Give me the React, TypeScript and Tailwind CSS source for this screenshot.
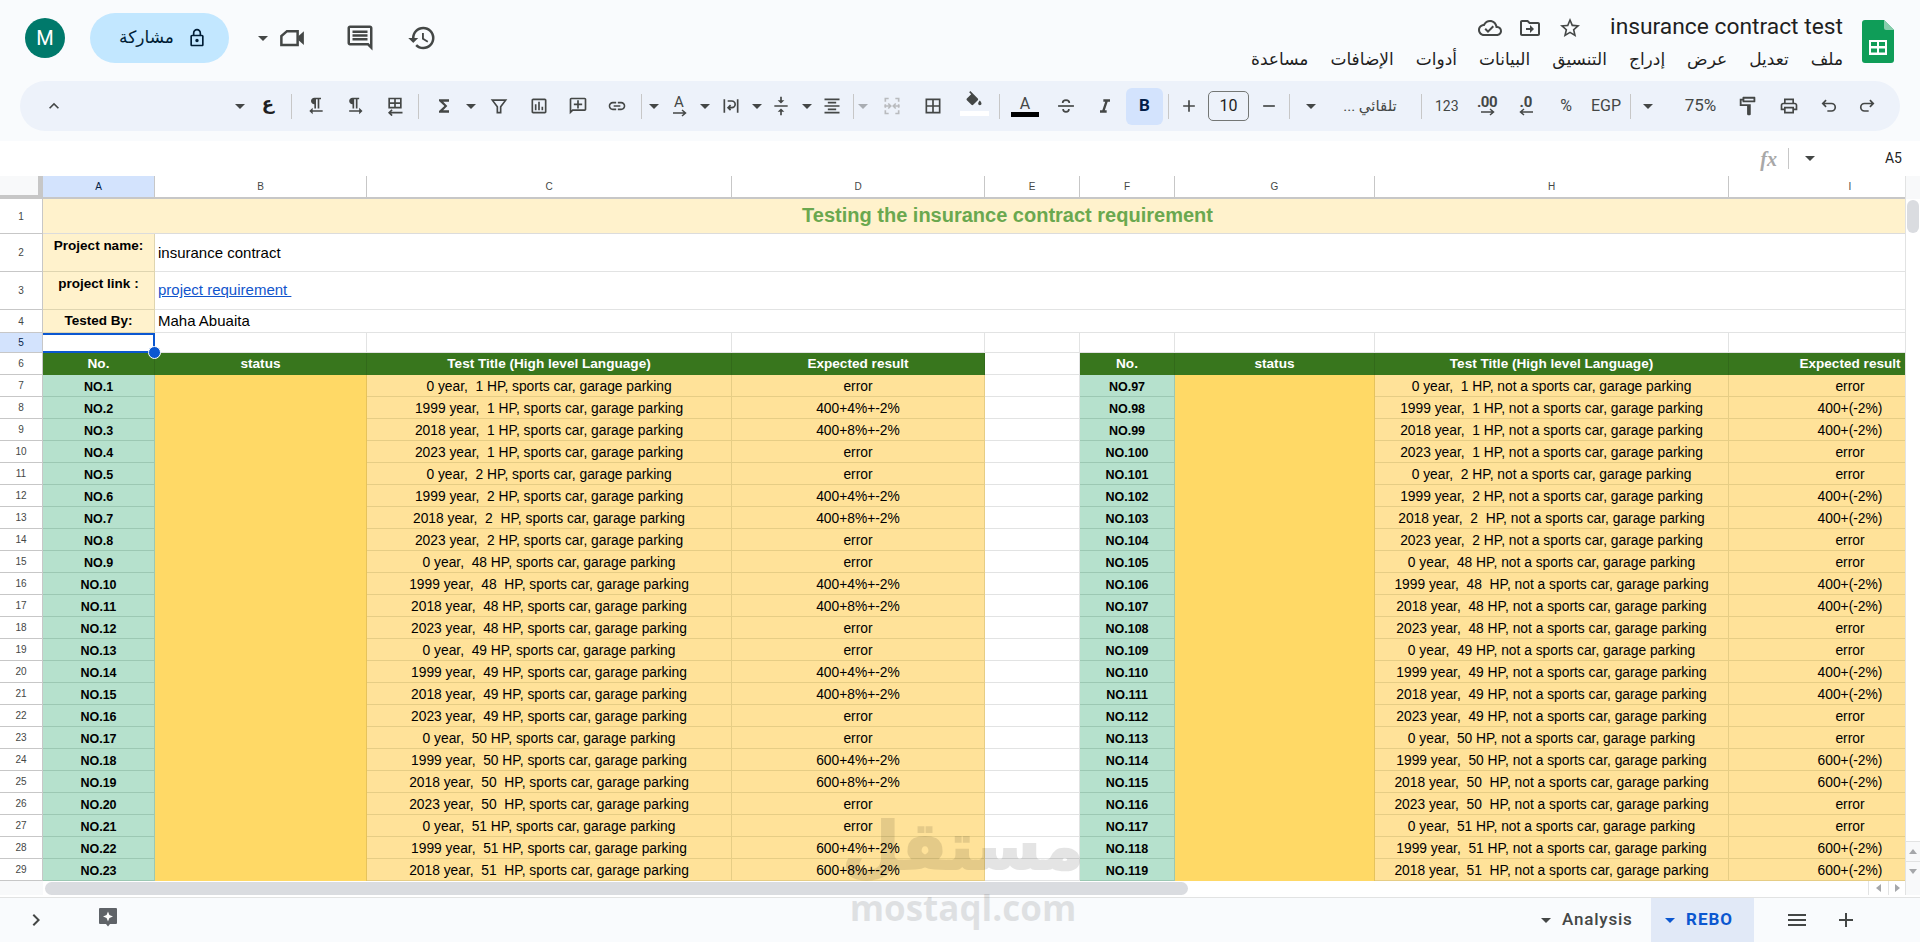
import type { ReactNode } from "react";

const ui = "font-['Roboto','DejaVu_Sans',sans-serif]";
const sheet = "font-['Liberation_Sans','Arial',sans-serif]";

const titles = [
  "0 year,  1 HP, sports car, garage parking",
  "1999 year,  1 HP, sports car, garage parking",
  "2018 year,  1 HP, sports car, garage parking",
  "2023 year,  1 HP, sports car, garage parking",
  "0 year,  2 HP, sports car, garage parking",
  "1999 year,  2 HP, sports car, garage parking",
  "2018 year,  2  HP, sports car, garage parking",
  "2023 year,  2 HP, sports car, garage parking",
  "0 year,  48 HP, sports car, garage parking",
  "1999 year,  48  HP, sports car, garage parking",
  "2018 year,  48 HP, sports car, garage parking",
  "2023 year,  48 HP, sports car, garage parking",
  "0 year,  49 HP, sports car, garage parking",
  "1999 year,  49 HP, sports car, garage parking",
  "2018 year,  49 HP, sports car, garage parking",
  "2023 year,  49 HP, sports car, garage parking",
  "0 year,  50 HP, sports car, garage parking",
  "1999 year,  50 HP, sports car, garage parking",
  "2018 year,  50  HP, sports car, garage parking",
  "2023 year,  50  HP, sports car, garage parking",
  "0 year,  51 HP, sports car, garage parking",
  "1999 year,  51 HP, sports car, garage parking",
  "2018 year,  51  HP, sports car, garage parking",
];

const menu = ["ملف", "تعديل", "عرض", "إدراج", "التنسيق", "البيانات", "أدوات", "الإضافات", "مساعدة"];
const columns = ["A", "B", "C", "D", "E", "F", "G", "H", "I"];

function leftResult(i: number) {
  const year = i % 4;
  if (year === 0 || year === 3) return "error";
  const base = i < 17 ? "400" : "600";
  return `${base}+${year === 1 ? "4" : "8"}%+-2%`;
}

function rightResult(i: number) {
  const year = i % 4;
  if (year === 0 || year === 3) return "error";
  return i < 17 ? "400+(-2%)" : "600+(-2%)";
}

function Mi({ d, className = "", size = 20 }: { d: string; className?: string; size?: number }) {
  return (
    <svg width={size} height={size} viewBox="0 0 24 24" fill="currentColor" className={`shrink-0 ${className}`}>
      <path d={d} />
    </svg>
  );
}

function Line({ children, className = "", size = 20 }: { children: ReactNode; className?: string; size?: number }) {
  return (
    <svg width={size} height={size} viewBox="0 0 24 24" fill="none" stroke="currentColor" strokeWidth="2" className={`shrink-0 ${className}`}>
      {children}
    </svg>
  );
}

// little arrow under the decimal and rotate buttons
function SmallArrow({ left = false }: { left?: boolean }) {
  return (
    <svg width="15" height="8" viewBox="0 0 15 8" fill="none" stroke="currentColor" strokeWidth="1.500" className={`shrink-0 ${left ? "-scale-x-100" : ""}`}>
      <path d="M1 4h12.500M10 1l3.500 3-3.500 3" />
    </svg>
  );
}

function Caret({ className = "" }: { className?: string }) {
  return <span className={`h-0 w-0 shrink-0 border-x-[5px] border-t-[5px] border-x-transparent border-t-[#444746] ${className}`} />;
}

function Sep({ className = "" }: { className?: string }) {
  return <span className={`h-[25px] w-px shrink-0 bg-[#c7c7c7] ${className}`} />;
}

function SheetsLogo() {
  return (
    <svg width="32" height="43" viewBox="0 0 32 43" className="shrink-0">
      <path d="M3 0h19l10 10v30a3 3 0 0 1-3 3H3a3 3 0 0 1-3-3V3a3 3 0 0 1 3-3z" fill="#0f9d58" />
      <path d="M22 0l10 10H24a2 2 0 0 1-2-2z" fill="#87ceac" />
      <path d="M7 20h18v15H7z" fill="#fff" />
      <path d="M9 22h6v4H9zm8 0h6v4h-6zM9 28.500h6v4H9zm8 0h6v4h-6z" fill="#0f9d58" />
    </svg>
  );
}

function Header() {
  return (
    <div className="flex h-[81px] items-start bg-[#f9fbfd]">
      <div className="ml-[25px] mt-[18px] flex h-10 w-10 items-center justify-center rounded-full bg-[#00796b] text-[20px] text-white">M</div>
      <div className="ml-[25px] mt-[13px] flex h-[50px] w-[139px] items-center justify-center gap-[13px] rounded-full bg-[#c2e7ff] pl-[7px] text-[#001d35]">
        <span dir="rtl" className="text-[17px]">مشاركة</span>
        <Mi size={20} className="text-[#001d35]" d="M18 8h-1V6c0-2.760-2.240-5-5-5S7 3.240 7 6v2H6c-1.100 0-2 .9-2 2v10c0 1.100.9 2 2 2h12c1.100 0 2-.9 2-2V10c0-1.100-.9-2-2-2zM9 6c0-1.660 1.340-3 3-3s3 1.340 3 3v2H9V6zm9 14H6V10h12v10zm-6-3c1.100 0 2-.9 2-2s-.9-2-2-2-2 .9-2 2 .9 2 2 2z" />
      </div>
      <div className="mt-[23px] flex items-center text-[#444746]">
        <Caret className="ml-[29px]" />
        <Line size={30} className="ml-[9px]">
          <path d="M8 6.500h8.500v11H3.500v-7z" />
          <path d="M17 10.500l4.500-4v11l-4.500-4z" fill="currentColor" stroke="none" />
        </Line>
        <Mi size={30} className="ml-[38px]" d="M21.990 4c0-1.100-.89-2-1.990-2H4c-1.100 0-2 .9-2 2v12c0 1.100.9 2 2 2h14l4 4-.01-18zM20 4v13.170L18.830 16H4V4h16zM6 12h12v2H6zm0-3h12v2H6zm0-3h12v2H6z" />
        <Mi size={30} className="ml-[32px]" d="M13 3a9 9 0 0 0-9 9H1l3.890 3.890.07.14L9 12H6c0-3.870 3.130-7 7-7s7 3.130 7 7-3.130 7-7 7c-1.930 0-3.680-.79-4.940-2.060l-1.420 1.420A8.954 8.954 0 0 0 13 21a9 9 0 0 0 0-18zm-1 5v5l4.280 2.540.72-1.210-3.500-2.080V8H12z" />
      </div>
      <div className="ml-auto mr-[19px] mt-[12px] flex flex-col items-end">
        <div className="flex h-[31px] items-center text-[#444746]">
          <Mi size={24} className="mr-[16px]" d="M19.350 10.040C18.670 6.590 15.640 4 12 4 9.110 4 6.600 5.640 5.350 8.040 2.340 8.360 0 10.910 0 14c0 3.310 2.690 6 6 6h13c2.760 0 5-2.240 5-5 0-2.640-2.050-4.780-4.650-4.960zM19 18H6c-2.210 0-4-1.790-4-4 0-2.050 1.530-3.760 3.560-3.970l1.070-.11.5-.95C8.080 7.140 9.940 6 12 6c2.620 0 4.880 1.860 5.390 4.430l.3 1.500 1.530.11c1.560.1 2.780 1.410 2.780 2.960 0 1.650-1.350 3-3 3zm-9-3.820l-2.090-2.090L6.500 13.500 10 17l6.010-6.010-1.410-1.410z" />
          <Mi size={24} className="mr-[16px]" d="M20 6h-8l-2-2H4c-1.100 0-2 .9-2 2v12c0 1.100.9 2 2 2h16c1.100 0 2-.9 2-2V8c0-1.100-.9-2-2-2zm0 12H4V6h5.170l2 2H20v10zm-8-1l4-4-4-4v3H8v2h4v3z" />
          <Mi size={24} className="mr-[28px]" d="M22 9.240l-7.190-.62L12 2 9.190 8.630 2 9.240l5.460 4.730L5.820 21 12 17.270 18.180 21l-1.630-7.030L22 9.240zM12 15.400l-3.760 2.270 1-4.280-3.320-2.880 4.380-.38L12 6.100l1.710 4.040 4.380.38-3.320 2.880 1 4.280L12 15.400z" />
          <span className="text-[22.800px] leading-none text-[#1f1f1f]">insurance contract test</span>
        </div>
        <div dir="rtl" className="mt-[4px] flex gap-[22px] text-[17px] leading-[24px] text-[#1f1f1f]">
          {menu.map((m) => (
            <span key={m}>{m}</span>
          ))}
        </div>
      </div>
      <div className="mr-[26px] mt-[20px]">
        <SheetsLogo />
      </div>
    </div>
  );
}

function Toolbar() {
  return (
    <div className="h-[60px] bg-[#f9fbfd]">
      <div className="mx-5 flex h-[50px] w-[1880px] items-center rounded-full bg-[#edf2fa] text-[14px] text-[#444746]">
        <Mi className="ml-[24px]" d="M7.410 15.410L12 10.830l4.590 4.580L18 14l-6-6-6 6z" />
        <Caret className="ml-[171px]" />
        <span className="-mt-[6px] ml-[13px] flex w-5 justify-center text-[18px] font-bold text-[#1f1f1f]">ع</span>
        <Sep className="ml-[13px]" />
        <Mi className="ml-[14px]" d="M10 10v5h2V4h2v11h2V4h2V2h-8C7.790 2 6 3.790 6 6s1.790 4 4 4zm-2 7v-3l-4 4 4 4v-3h12v-2H8z" />
        <Mi className="ml-[19px]" d="M9 10v5h2V4h2v11h2V4h2V2H9C6.790 2 5 3.790 5 6s1.790 4 4 4zm12 8l-4-4v3H5v2h12v3l4-4z" />
        <Line className="ml-[20px]">
          <path d="M5 3h14v11H5zM12 3v11M5 8.500h14" />
          <path d="M21 20H5M8.500 16.500L5 20l3.500 3.500" />
        </Line>
        <Sep className="ml-[13px]" />
        <Mi className="ml-[15px]" d="M18 4H6v2l6.500 6L6 18v2h12v-3h-7l5-5-5-5h7z" />
        <Caret className="ml-[12px]" />
        <Line className="ml-[13px]">
          <path d="M4 5h16l-6 8v7h-4v-7z" />
        </Line>
        <Mi className="ml-[20px]" d="M19 3H5c-1.100 0-2 .9-2 2v14c0 1.100.9 2 2 2h14c1.100 0 2-.9 2-2V5c0-1.100-.9-2-2-2zm0 16H5V5h14v14zM7 10h2v7H7zm4-3h2v10h-2zm4 6h2v4h-2z" />
        <Mi className="ml-[19px] -scale-x-100" d="M22 4c0-1.100-.9-2-2-2H4c-1.100 0-2 .9-2 2v12c0 1.100.9 2 2 2h14l4 4V4zm-2 13.170L18.830 16H4V4h16v13.170zM13 5h-2v4H7v2h4v4h2v-4h4V9h-4z" />
        <Mi className="ml-[19px]" d="M3.900 12c0-1.710 1.390-3.100 3.100-3.100h4V7H7c-2.760 0-5 2.240-5 5s2.240 5 5 5h4v-1.900H7c-1.710 0-3.100-1.390-3.100-3.100zM8 13h8v-2H8v2zm9-6h-4v1.900h4c1.710 0 3.100 1.390 3.100 3.100s-1.390 3.100-3.100 3.100h-4V17h4c2.760 0 5-2.240 5-5s-2.240-5-5-5z" />
        <Sep className="ml-[14px]" />
        <Caret className="ml-[7px]" />
        <span className="ml-[10px] flex w-5 flex-col items-center">
          <span className="text-[15px] leading-[14px]">A</span>
          <SmallArrow />
        </span>
        <Caret className="ml-[11px]" />
        <Line className="ml-[11px]">
          <path d="M4 4v16M20 4v16" />
          <path d="M8 6h5a4 4 0 0 1 0 8H9M11.500 11L8.500 14l3 3" />
        </Line>
        <Caret className="ml-[11px]" />
        <Mi className="ml-[9px]" d="M8 19h3v4h2v-4h3l-4-4-4 4zm8-14h-3V1h-2v4H8l4 4 4-4zM4 11v2h16v-2H4z" />
        <Caret className="ml-[11px]" />
        <Mi className="ml-[10px]" d="M7 15v2h10v-2H7zm-4 6h18v-2H3v2zm0-8h18v-2H3v2zm4-6v2h10V7H7zM3 3v2h18V3H3z" />
        <Sep className="ml-[11px]" />
        <Caret className="ml-[4px] opacity-40" />
        <Line className="ml-[14px] text-[#b9bbbe]">
          <path d="M8 3H4v4M16 3h4v4M8 21H4v-4M16 21h4v-4M4 10v4M20 10v4" />
          <path d="M3 12h7M7.500 9l3 3-3 3M21 12h-7M16.500 9l-3 3 3 3" />
        </Line>
        <Mi className="ml-[21px]" d="M3 3v18h18V3H3zm8 16H5v-6h6v6zm0-8H5V5h6v6zm8 8h-6v-6h6v6zm0-8h-6V5h6v6z" />
        <span className="ml-[21px] flex w-5 flex-col items-center">
          <Mi size={20} className="-mt-[5px]" d="M16.560 8.940L7.620 0 6.210 1.410l2.380 2.380-5.150 5.150c-.59.59-.59 1.540 0 2.120l5.500 5.500c.29.29.68.44 1.060.44s.77-.15 1.060-.44l5.500-5.500c.59-.58.59-1.530 0-2.120zM19 11.500s-2 2.170-2 3.500c0 1.100.9 2 2 2s2-.9 2-2c0-1.330-2-3.500-2-3.500z" />
          <span className="h-[5px] w-[29px] shrink-0 bg-white" />
        </span>
        <Sep className="ml-[15px]" />
        <span className="ml-[15px] flex w-5 flex-col items-center">
          <span className="text-[16px] leading-[17px]">A</span>
          <span className="h-[5px] w-[28px] shrink-0 bg-black" />
        </span>
        <Line className="ml-[21px]">
          <path d="M2.500 12h19" />
          <path d="M8 8.500C8 6 10 5 12 5s4 1 4 3.500M8.500 15.500C8.500 18 10 19 12 19s3.500-1 3.500-3.500" />
        </Line>
        <Mi className="ml-[19px]" d="M10 4v3h2.210l-3.420 10H6v3h8v-3h-2.210l3.420-10H18V4z" />
        <span className="ml-[11px] flex h-[37px] w-[37px] items-center justify-center rounded-[6px] bg-[#d3e3fd] text-[17px] font-bold text-[#041e49]">B</span>
        <Sep className="ml-[5px]" />
        <Mi className="ml-[10px]" d="M19 13h-6v6h-2v-6H5v-2h6V5h2v6h6v2z" />
        <span className="ml-[9px] flex h-[30px] w-[41px] items-center justify-center rounded-[5px] border border-[#747775] text-[16px] text-[#1f1f1f]">10</span>
        <Mi className="ml-[10px]" d="M19 13H5v-2h14v2z" />
        <Sep className="ml-[10px]" />
        <Caret className="ml-[16px]" />
        <span dir="rtl" className="ml-[23px] flex w-[62px] justify-center whitespace-nowrap text-[15px]">تلقائي ...</span>
        <Sep className="ml-[20px]" />
        <span className="ml-[13px] w-[22px] whitespace-nowrap text-center text-[14px]">123</span>
        <span className="ml-[18px] flex w-6 flex-col items-center">
          <span className="text-[15px] font-bold leading-[12px] tracking-[-0.5px]">.00</span>
          <SmallArrow />
        </span>
        <span className="ml-[17px] flex w-5 flex-col items-center">
          <span className="text-[15px] font-bold leading-[12px]">.0</span>
          <SmallArrow left />
        </span>
        <span className="ml-[23px] flex w-[14px] justify-center text-[16px]">%</span>
        <span className="ml-[17px] flex w-8 justify-center text-[16px]">EGP</span>
        <Sep className="ml-[8px]" />
        <Caret className="ml-[12px]" />
        <span className="ml-[30px] flex w-[35px] justify-center text-[17px]">75%</span>
        <Mi size={22} className="ml-[19px] -scale-x-100" d="M18 4V3c0-.55-.45-1-1-1H5c-.55 0-1 .45-1 1v4c0 .55.45 1 1 1h12c.55 0 1-.45 1-1V6h1v4H9v11c0 .55.45 1 1 1h2c.55 0 1-.45 1-1v-9h8V4h-3zm-2 2H6V4h10v2z" />
        <Mi className="ml-[20px]" d="M19 8h-1V3H6v5H5c-1.660 0-3 1.340-3 3v6h4v4h12v-4h4v-6c0-1.660-1.340-3-3-3zM8 5h8v3H8V5zm8 12v2H8v-4h8v2zm2-2v-2H6v2H4v-4c0-.55.45-1 1-1h14c.55 0 1 .45 1 1v4h-2z" />
        <Line className="ml-[20px]">
          <path d="M8.500 5L4.500 9l4 4M4.500 9H15a4.500 4.500 0 0 1 0 9h-5" />
        </Line>
        <Line className="ml-[18px] -scale-x-100">
          <path d="M8.500 5L4.500 9l4 4M4.500 9H15a4.500 4.500 0 0 1 0 9h-5" />
        </Line>
      </div>
    </div>
  );
}

function FormulaBar() {
  return (
    <div className="flex h-[35px] items-center justify-end bg-white text-[#444746]">
      <span className="mr-[11px] font-['Liberation_Serif',serif] text-[20px] font-bold italic text-[#a8a8a8]">fx</span>
      <span className="h-[21px] w-px bg-[#c7c7c7]" />
      <Caret className="ml-[16px]" />
      <span className="ml-[70px] mr-[18px] text-[14px] text-[#1f1f1f]">A5</span>
    </div>
  );
}

function Grid() {
  const rowBase = "flex items-center justify-center border-r border-b border-[#c7c7c7] text-[10px]";
  const rowNo = `${rowBase} bg-white text-[#444746]`;
  const blank = "border-r border-b border-[#e2e3e3] bg-white";
  const head = "flex items-center justify-center border-r border-[#326a1a] bg-[#38761d] pt-[1px] text-[13.600px] font-bold text-white";
  const no = "flex items-end justify-center border-r border-b border-[#9cc8b3] bg-[#b6e1cd] text-[12.500px] font-bold leading-[17px] text-black";
  const data = "flex items-center justify-center whitespace-pre border-r border-b border-[#e6cd85] bg-[#ffe299] pt-[3px] text-[13.800px] text-black";
  const label = "flex justify-center border-r border-b border-[#dfd5b0] bg-[#fff2cc] text-[13.500px] font-bold text-black";
  const info = "col-span-8 flex items-center border-b border-[#e2e3e3] bg-white pl-[3px] text-[15px] text-black";

  return (
    <div className={`grid w-[1905px] shrink-0 grid-cols-[43px_112px_212px_365px_253px_95px_95px_200px_354px_243px] grid-rows-[23px_35px_38px_38px_23px_20px_22px_repeat(23,22px)] overflow-hidden ${sheet}`}>
      <div className="border-r-[5px] border-b-4 border-[#c7c7c7] bg-[#f8f9fa]" />
      {columns.map((c) => (
        <div
          key={c}
          className={`flex items-center justify-center border-r border-b-2 border-[#c7c7c7] text-[10px] ${c === "A" ? "bg-[#d3e3fd] text-[#041e49]" : "bg-white text-[#444746]"}`}
        >
          {c}
        </div>
      ))}

      <div className={rowNo}>1</div>
      <div className="col-span-9 flex items-center justify-center border-b border-[#dcdcdc] bg-[#fff2cc] pb-[2px] text-[20px] font-bold text-[#6aa84f]">
        Testing the insurance contract requirement
      </div>

      <div className={rowNo}>2</div>
      <div className={`${label} pt-[2px]`}>Project name:</div>
      <div className={`${info} pt-[2px]`}>insurance contract</div>

      <div className={rowNo}>3</div>
      <div className={`${label} pt-[2px]`}>project link :</div>
      <div className={info}>
        <span className="whitespace-pre text-[#1155cc] underline">project requirement </span>
      </div>

      <div className={rowNo}>4</div>
      <div className={`${label} items-center`}>Tested By:</div>
      <div className={info}>Maha Abuaita</div>

      <div className={`${rowBase} bg-[#d3e3fd] text-[#041e49]`}>5</div>
      <div className="relative border-2 border-l-0 border-[#0b57d0] bg-white">
        <span className="absolute -bottom-[8px] -right-[8px] z-10 h-[13px] w-[13px] rounded-full border border-white bg-[#0b57d0]" />
      </div>
      {columns.slice(1).map((c) => (
        <div key={c} className={blank} />
      ))}

      <div className={rowNo}>6</div>
      <div className={head}>No.</div>
      <div className={head}>status</div>
      <div className={head}>Test Title (High level Language)</div>
      <div className={head}>Expected result</div>
      <div className={blank} />
      <div className={head}>No.</div>
      <div className={head}>status</div>
      <div className={head}>Test Title (High level Language)</div>
      <div className={head}>Expected result</div>

      {titles.map((t, i) => (
        <div key={t} className="contents">
          <div className={rowNo}>{i + 7}</div>
          <div className={no}>NO.{i + 1}</div>
          {i === 0 && <div className="row-span-23 border-r border-[#e6c35c] bg-[#ffd966]" />}
          <div className={data}>{t}</div>
          <div className={data}>{leftResult(i)}</div>
          <div className={blank} />
          <div className={no}>NO.{i + 97}</div>
          {i === 0 && <div className="row-span-23 border-r border-[#e6c35c] bg-[#ffd966]" />}
          <div className={data}>{t.replace(", sports car", ", not a sports car")}</div>
          <div className={data}>{rightResult(i)}</div>
        </div>
      ))}
    </div>
  );
}

function VerticalScroll() {
  return (
    <div className="flex w-[15px] shrink-0 flex-col border-l border-[#e2e3e3] bg-white">
      <div className="h-[23px] bg-[#f8f9fa]" />
      <div className="ml-px mt-px h-[33px] w-[12px] rounded-full bg-[#dadce0]" />
      <div className="mt-auto flex h-5 items-center justify-center border-t border-[#e2e3e3] bg-[#f8f9fa]">
        <span className="h-0 w-0 border-x-4 border-b-[5px] border-x-transparent border-b-[#a5a7aa]" />
      </div>
      <div className="flex h-5 items-center justify-center border-t border-[#e2e3e3] bg-[#f8f9fa]">
        <span className="h-0 w-0 border-x-4 border-t-[5px] border-x-transparent border-t-[#a5a7aa]" />
      </div>
    </div>
  );
}

function HorizontalScroll() {
  return (
    <div className="flex h-[16px] items-start bg-white">
      <div className="h-[14px] w-[43px] bg-[#f8f9fa]" />
      <div className="ml-[2px] mt-px h-[13px] w-[1143px] rounded-l-full rounded-r-full bg-[#dadce0]" />
      <div className="ml-auto flex">
        <span className="flex h-[14px] w-5 items-center justify-center border-l border-[#e2e3e3]">
          <span className="h-0 w-0 border-y-4 border-r-[5px] border-y-transparent border-r-[#a5a7aa]" />
        </span>
        <span className="flex h-[14px] w-[18px] items-center justify-center border-x border-[#e2e3e3]">
          <span className="h-0 w-0 border-y-4 border-l-[5px] border-y-transparent border-l-[#a5a7aa]" />
        </span>
        <span className="h-[14px] w-[14px] bg-[#f8f9fa]" />
      </div>
    </div>
  );
}

function Tabs() {
  return (
    <div className="flex h-[45px] items-center border-t border-[#e2e3e3] bg-[#f9fbfd] text-[#444746]">
      <Mi size={24} className="ml-[24px]" d="M10 6L8.590 7.410 13.170 12l-4.580 4.590L10 18l6-6z" />
      <svg width="20" height="20" viewBox="0 0 20 20" className="ml-[50px] -mt-[6px] shrink-0 text-[#5f6368]" fill="currentColor">
        <path d="M2 1h16a1 1 0 0 1 1 1v14a1 1 0 0 1-1 1h-6l-2 2.500L8 17H2a1 1 0 0 1-1-1V2a1 1 0 0 1 1-1z" />
        <path d="M10 4.500l1.400 3.600 3.600 1.400-3.600 1.400L10 14.500l-1.400-3.600L5 9.500l3.600-1.400z" fill="#fff" />
      </svg>
      <Caret className="ml-[1423px]" />
      <span className="ml-[11px] w-[72px] whitespace-nowrap text-[17px] font-medium tracking-[0.8px]">Analysis</span>
      <span className="ml-[17px] flex h-[44px] w-[103px] items-center bg-[#e1e9f7] text-[#0b57d0]">
        <span className="ml-[14px] h-0 w-0 border-x-[5px] border-t-[5px] border-x-transparent border-t-[#0b57d0]" />
        <span className="ml-[11px] text-[17px] font-bold tracking-[1px]">REBO</span>
      </span>
      <Mi size={24} className="ml-[31px]" d="M3 18h18v-2H3v2zm0-5h18v-2H3v2zm0-7v2h18V6H3z" />
      <Mi size={24} className="ml-[25px]" d="M19 13h-6v6h-2v-6H5v-2h6V5h2v6h6v2z" />
    </div>
  );
}

export default function App() {
  return (
    <div className={`relative flex h-[942px] w-[1920px] flex-col overflow-hidden bg-white ${ui}`}>
      <Header />
      <Toolbar />
      <FormulaBar />
      <div className="flex h-[705px] overflow-hidden">
        <Grid />
        <VerticalScroll />
      </div>
      <HorizontalScroll />
      <Tabs />
      {/* watermark sits over the sheet */}
      <div className="pointer-events-none absolute left-[847px] top-[806px] flex w-[232px] flex-col items-center text-black opacity-10">
        <span dir="rtl" className="font-['DejaVu_Sans',sans-serif] text-[66px] font-bold leading-[82px] [-webkit-text-stroke:2px_black]">مستقل</span>
        <span className="font-['Open_Sans',sans-serif] text-[35px] font-bold leading-[40px]">mostaql.com</span>
      </div>
    </div>
  );
}
